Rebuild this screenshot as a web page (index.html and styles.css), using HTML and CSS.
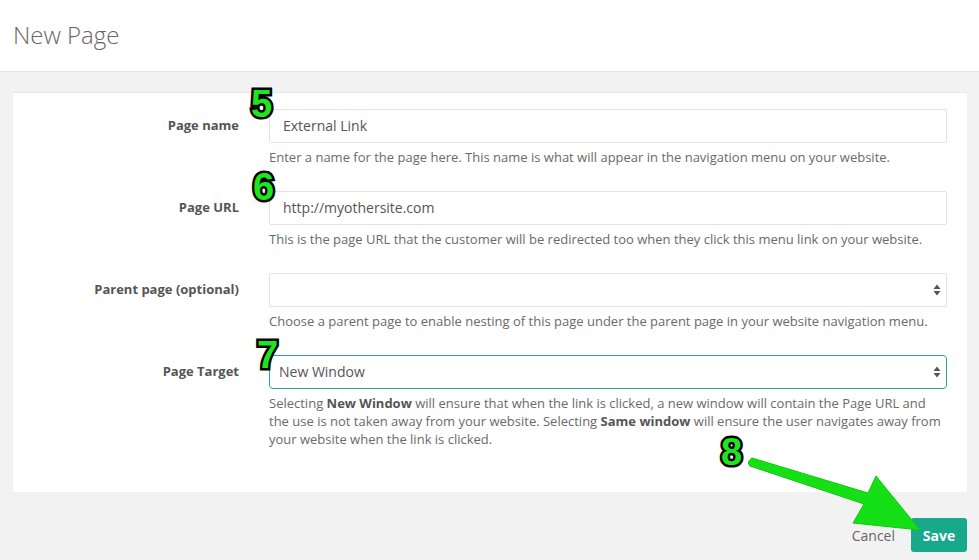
FILE: index.html
```html
<!DOCTYPE html>
<html lang="en">

<head>
    <meta charset="UTF-8">
    <meta name="viewport" content="width=device-width, initial-scale=1.0">
    <title>New Page</title>
    <link rel="stylesheet" href="styles.css">
</head>

<body>
    <header class="page-header">
        <h1>New Page</h1>
    </header>

    <main class="content">
        <form class="panel">
            <div class="field">
                <label class="field-label" for="pageName">Page name</label>
                <div class="field-body">
                    <span class="step step-5">5</span>
                    <input class="input" id="pageName" type="text" value="External Link">
                    <p class="help">Enter a name for the page here. This name is what will appear in the navigation menu on your website.</p>
                </div>
            </div>

            <div class="field">
                <label class="field-label" for="pageUrl">Page URL</label>
                <div class="field-body">
                    <span class="step step-6">6</span>
                    <input class="input" id="pageUrl" type="text" value="http://myothersite.com">
                    <p class="help">This is the page URL that the customer will be redirected too when they click this menu link on your website.</p>
                </div>
            </div>

            <div class="field">
                <label class="field-label" for="parentPage">Parent page (optional)</label>
                <div class="field-body">
                    <div class="select-wrap">
                        <select class="select" id="parentPage">
                            <option></option>
                        </select>
                        <svg class="select-arrows" width="8" height="12" viewBox="0 0 8 12">
                            <path d="M4 0.5 L7.5 5 L0.5 5 Z M4 11.5 L7.5 7 L0.5 7 Z" fill="#555"/>
                        </svg>
                    </div>
                    <p class="help">Choose a parent page to enable nesting of this page under the parent page in your website navigation menu.</p>
                </div>
            </div>

            <div class="field">
                <label class="field-label" for="pageTarget">Page Target</label>
                <div class="field-body">
                    <span class="step step-7">7</span>
                    <div class="select-wrap">
                        <select class="select select-focus" id="pageTarget">
                            <option>New Window</option>
                            <option>Same window</option>
                        </select>
                        <svg class="select-arrows" width="8" height="12" viewBox="0 0 8 12">
                            <path d="M4 0.5 L7.5 5 L0.5 5 Z M4 11.5 L7.5 7 L0.5 7 Z" fill="#555"/>
                        </svg>
                    </div>
                    <p class="help">Selecting <b>New Window</b> will ensure that when the link is clicked, a new window will contain the Page URL and the use is not taken away from your website. Selecting <b>Same window</b> will ensure the user navigates away from your website when the link is clicked.</p>
                </div>
            </div>
        </form>

        <div class="actions">
            <a class="btn-cancel" href="#">Cancel</a>
            <button class="btn-save" type="button">Save</button>
        </div>
    </main>

    <!-- annotation overlay -->
    <span class="step step-8">8</span>
    <svg class="arrow" width="979" height="560" viewBox="0 0 979 560">
        <path d="M752 458 L868 493 L876 476 L920 530 L853 523 L864 504 L750 466 Q746 462 752 458 Z"
            fill="#15e015" stroke="#10c810" stroke-width="1" stroke-linejoin="round"/>
    </svg>
</body>

</html>
```

FILE: styles.css
```css
body {
    margin: 0;
    background-color: #f2f2f2;
    font-family: "Open Sans", "Liberation Sans", sans-serif;
    color: #555;
}

.page-header {
    height: 71px;
    background-color: #fff;
    border-bottom: 1px solid #e2e2e2;
    display: flex;
    align-items: center;
    padding-left: 13px;
}

.page-header h1 {
    margin: 0;
    font-size: 24px;
    font-weight: 300;
    color: #666;
    padding-bottom: 2px;
}

.content {
    padding: 20px 12px 0 13px;
}

.panel {
    background-color: #fff;
    border-top: 1px solid #e6e6e6;
    padding: 16px 20px 19px 0;
}

.field {
    display: flex;
    align-items: flex-start;
    margin-bottom: 25px;
}

.field-label {
    width: 226px;
    flex-shrink: 0;
    text-align: right;
    font-size: 13px;
    font-weight: bold;
    line-height: 32px;
    color: #555;
    margin-right: 30px;
}

.field-body {
    flex: 1;
    position: relative;
}

.input,
.select {
    display: block;
    box-sizing: border-box;
    width: 100%;
    height: 34px;
    border: 1px solid #e3e3e3;
    border-radius: 2px;
    font-family: inherit;
    font-size: 14px;
    color: #555;
    background-color: #fff;
    outline: none;
}

.input {
    padding: 0 13px 1px 13px;
}

.select {
    -webkit-appearance: none;
    appearance: none;
    padding: 0 30px 1px 9px;
}

.select-focus {
    border-color: #2aa597;
    border-radius: 4px;
}

.select-wrap {
    position: relative;
}

.select-arrows {
    position: absolute;
    right: 6px;
    top: 11px;
}

.help {
    margin: 5px 0 0 0;
    font-size: 13px;
    line-height: 18px;
    color: #6a6a6a;
}

.help b {
    color: #555;
}

.actions {
    display: flex;
    justify-content: flex-end;
    align-items: center;
    margin-top: 26px;
    gap: 16px;
}

.btn-cancel {
    font-size: 14px;
    color: #666;
    text-decoration: none;
}

.btn-save {
    height: 34px;
    width: 56px;
    border: none;
    border-radius: 3px;
    background-color: #18a88b;
    color: #fff;
    font-family: inherit;
    font-size: 14px;
    font-weight: bold;
    cursor: pointer;
}

/* green step numbers drawn over the form */
.step {
    position: absolute;
    font-family: "Liberation Sans", sans-serif;
    font-weight: bold;
    font-size: 38px;
    line-height: 1;
    color: #1ee61e;
    -webkit-text-stroke: 5px #000;
    paint-order: stroke fill;
    z-index: 2;
}

.step-5 {
    left: -18px;
    top: -24px;
}

.step-6 {
    left: -16px;
    top: -23px;
}

.step-7 {
    left: -12px;
    top: -19px;
}

.step-8 {
    left: 721px;
    top: 433px;
}

.arrow {
    position: absolute;
    left: 0;
    top: 0;
    pointer-events: none;
    z-index: 3;
}
```
